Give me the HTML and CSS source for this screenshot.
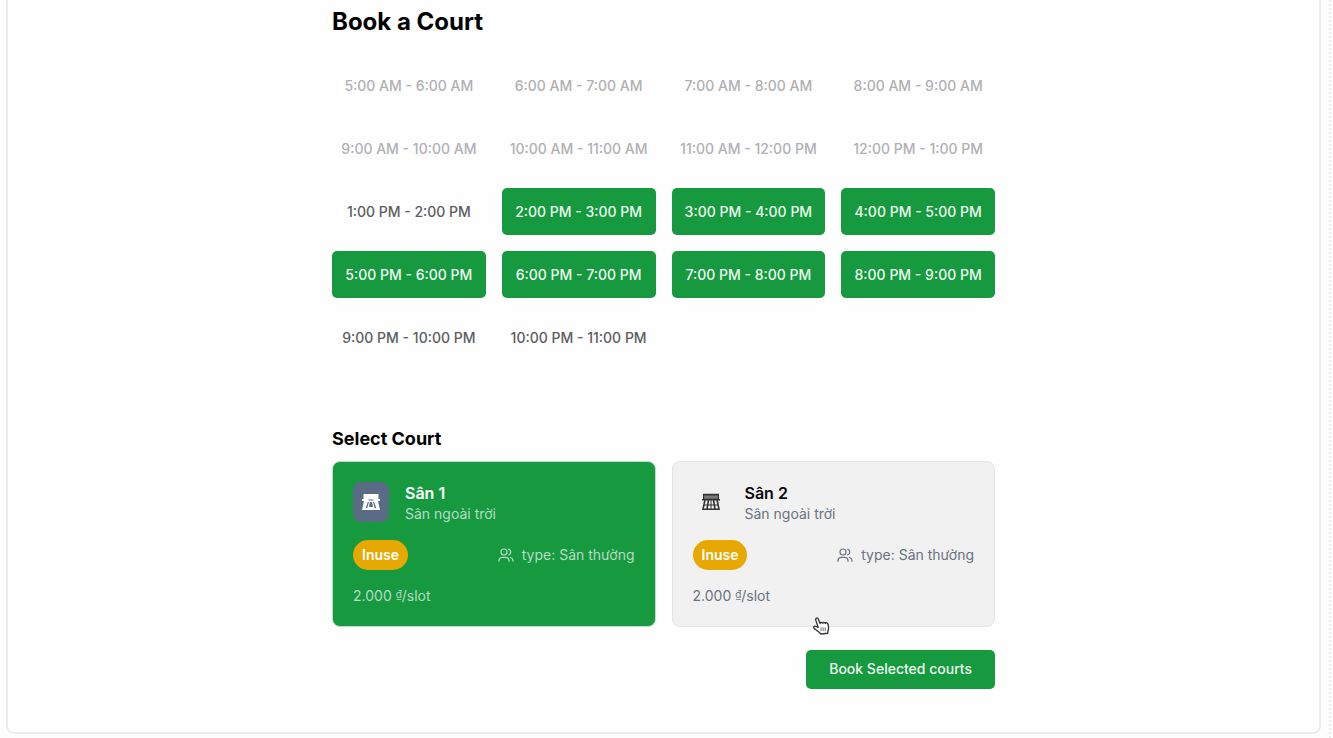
FILE: index.html
```html
<!DOCTYPE html>
<html lang="en">
<head>
<meta charset="utf-8">
<meta name="viewport" content="width=device-width, initial-scale=1">
<title>Book a Court</title>
<link rel="stylesheet" href="styles.css">
</head>
<body>
<svg class="sprite" aria-hidden="true">
  <symbol id="users" viewBox="0 0 24 24" fill="none" stroke="currentColor" stroke-width="1.800" stroke-linecap="round" stroke-linejoin="round">
    <circle cx="9" cy="7.500" r="4.500"/>
    <path d="M1.500 21.500V20a5 5 0 0 1 5-4.500h5a5 5 0 0 1 5 4.500v1.500"/>
    <path d="M16 3.200a4.500 4.500 0 0 1 0 8.600M18.500 15.700a5 5 0 0 1 4 4.300v1.500"/>
  </symbol>
  <symbol id="court" viewBox="0 0 20 18">
    <path fill="currentColor" fill-rule="evenodd" d="M2.500 1h15v5H19v2h-2l2 9H1l2-9H1V6h1.500zM7.500 6.500v1h5v-1zM6.800 9l-2 6h1.500l1.700-6zM9 9l-1 5h4l-1-5zM12 9l1.700 6h1.500l-2-6z"/>
  </symbol>
  <symbol id="court-net" viewBox="0 0 20 18">
    <path fill="currentColor" fill-opacity=".75" d="M2 1h16v6H2z"/>
    <path fill="none" stroke="currentColor" stroke-width="1.600" d="M2 1.500h16M1 6.800h18M4 7 2 16.200h16L16 7M7.500 7 6 16M12.500 7 14 16"/>
    <path fill="none" stroke="currentColor" stroke-width="1" d="M10 7v9M3 12h14M2.500 1v6M17.500 1v6"/>
    <path fill="none" stroke="#aaa" stroke-width=".7" d="M3.500 4h13"/>
  </symbol>
</svg>
<div class="frame">
  <main class="panel">
    <div class="content">
      <h1 class="title">Book a Court</h1>
      <div class="slots">
        <button class="slot" disabled>5:00 AM - 6:00 AM</button>
        <button class="slot" disabled>6:00 AM - 7:00 AM</button>
        <button class="slot" disabled>7:00 AM - 8:00 AM</button>
        <button class="slot" disabled>8:00 AM - 9:00 AM</button>
        <button class="slot" disabled>9:00 AM - 10:00 AM</button>
        <button class="slot" disabled>10:00 AM - 11:00 AM</button>
        <button class="slot" disabled>11:00 AM - 12:00 PM</button>
        <button class="slot" disabled>12:00 PM - 1:00 PM</button>
        <button class="slot">1:00 PM - 2:00 PM</button>
        <button class="slot selected">2:00 PM - 3:00 PM</button>
        <button class="slot selected">3:00 PM - 4:00 PM</button>
        <button class="slot selected">4:00 PM - 5:00 PM</button>
        <button class="slot selected">5:00 PM - 6:00 PM</button>
        <button class="slot selected">6:00 PM - 7:00 PM</button>
        <button class="slot selected">7:00 PM - 8:00 PM</button>
        <button class="slot selected">8:00 PM - 9:00 PM</button>
        <button class="slot">9:00 PM - 10:00 PM</button>
        <button class="slot">10:00 PM - 11:00 PM</button>
      </div>
      <h2 class="subtitle">Select Court</h2>
      <div class="courts">
        <article class="card chosen">
          <div class="card-head">
            <span class="avatar"><svg class="court-icon" aria-hidden="true"><use href="#court"/></svg></span>
            <div>
              <h3 class="name">Sân 1</h3>
              <p class="muted">Sân ngoài trời</p>
            </div>
          </div>
          <div class="card-row">
            <span class="badge">Inuse</span>
            <span class="type muted"><svg class="users-icon" aria-hidden="true"><use href="#users"/></svg>type: Sân thường</span>
          </div>
          <p class="muted">2.000 <span class="currency">₫</span>/slot</p>
        </article>
        <article class="card">
          <div class="card-head">
            <span class="avatar"><svg class="court-icon" aria-hidden="true"><use href="#court-net"/></svg></span>
            <div>
              <h3 class="name">Sân 2</h3>
              <p class="muted">Sân ngoài trời</p>
            </div>
          </div>
          <div class="card-row">
            <span class="badge">Inuse</span>
            <span class="type muted"><svg class="users-icon" aria-hidden="true"><use href="#users"/></svg>type: Sân thường</span>
          </div>
          <p class="muted">2.000 <span class="currency">₫</span>/slot</p>
          <svg class="pointer" viewBox="0 0 18 20" aria-hidden="true">
            <path fill="#fff" stroke="#333" stroke-width="1.400" stroke-linejoin="round" d="M5.500 12 3 4.500C2.300 2.200 4.700 1.200 5.600 3.200L7.500 8c.2-1.600 2.300-1.800 2.800-.3.400-1.400 2.300-1.400 2.700.1.600-1.100 2.500-.8 2.800.7.900 2.700 1 4.900 0 7.500l-.2 2.200-7.200.8C6.500 17 3.700 15 1.500 13.300c-1.600-1.500-.1-3.200 1.600-2.300z"/>
            <path stroke="#666" stroke-width="1" d="M8.500 12v4M10.700 12v4M12.900 12v4"/>
          </svg>
        </article>
      </div>
      <div class="actions"><button class="book">Book Selected courts</button></div>
    </div>
  </main>
</div>
</body>
</html>
```
FILE: styles.css
```css
* { box-sizing: border-box; }
body {
  margin: 0;
  background: #fdfdfd;
  color: #09090b;
  font-family: Inter, "Noto Sans", sans-serif;
  font-size: 14px;
  line-height: 20px;
}
h1, h2, h3, p { margin: 0; }
button { font: inherit; border: 0; cursor: pointer; }
.sprite { position: absolute; width: 0; height: 0; }
.frame {
  margin-right: 2px;
  padding: 0 8px 4px 6px;
  border-right: 2px dotted #ececee;
}
.panel {
  padding: 0 24px 43px;
  border: 2px solid #ececee;
  border-top: 0;
  border-radius: 0 0 8px 8px;
  background: #fefefe;
}
.content { max-width: 663px; margin: 0 auto; }
.title {
  padding: 6px 0 24px;
  font-size: 24px;
  line-height: 32px;
  font-weight: 700;
  color: #000;
}
.slots {
  display: grid;
  grid-template-columns: repeat(4, 1fr);
  gap: 16px;
}
.slot {
  height: 47px;
  padding: 0;
  border-radius: 5px;
  background: transparent;
  color: #5c5c61;
  font-weight: 500;
}
.slot:disabled { color: #b0b0b4; cursor: default; }
.slot.selected { background: #16993f; color: #eefbf1; }
.subtitle {
  margin: 64px 0 8px;
  font-size: 18px;
  line-height: 28px;
  font-weight: 700;
  color: #000;
}
.courts {
  display: grid;
  grid-template-columns: 1fr 1fr;
  gap: 16px;
}
.card {
  position: relative;
  display: grid;
  gap: 16px;
  padding: 20px;
  border: 1px solid #e4e4e7;
  border-radius: 8px;
  background: #f1f1f1;
}
.card.chosen { border-color: #b9dfc5; background: #16993f; color: #fff; }
.card-head { display: flex; gap: 16px; }
.avatar {
  display: flex;
  align-items: center;
  justify-content: center;
  width: 36px;
  height: 40px;
  border-radius: 8px;
}
.chosen .avatar { background: #5a6b85; }
.court-icon { width: 20px; height: 18px; color: #333; }
.chosen .court-icon { color: #fff; }
.name { font-size: 16px; line-height: 22px; font-weight: 600; }
.muted { color: #6b7280; }
.chosen .muted { color: #b5dcc5; }
.card-row { display: flex; align-items: center; justify-content: space-between; }
.badge {
  padding: 5px 9px;
  border-radius: 16px;
  background: #e7a802;
  color: #fff;
  font-weight: 600;
}
.type { display: flex; align-items: center; gap: 8px; }
.users-icon { width: 16px; height: 16px; }
.currency { font-size: 10px; line-height: 10px; vertical-align: 3px; }
.pointer {
  position: absolute;
  left: 140px;
  bottom: -9px;
  width: 17px;
  height: 19px;
}
.actions { display: flex; justify-content: flex-end; margin-top: 23px; }
.book {
  padding: 9px 23px 10px;
  border-radius: 5px;
  background: #16993f;
  color: #eefbf1;
  font-weight: 500;
}
```
